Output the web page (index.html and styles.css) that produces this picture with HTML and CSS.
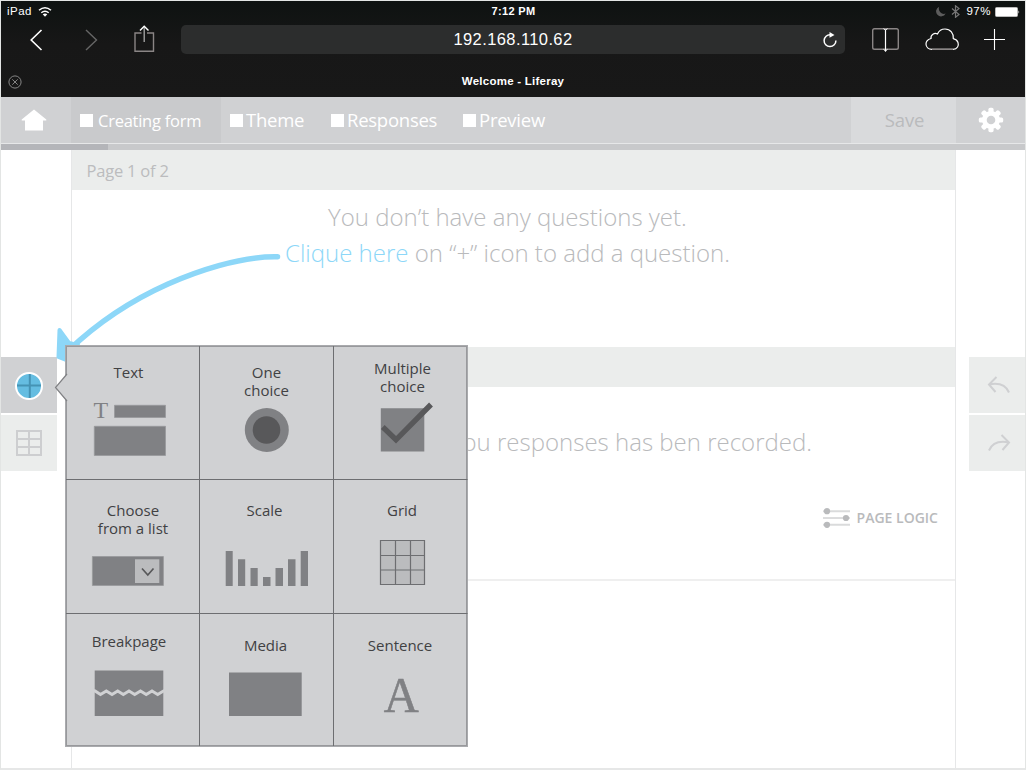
FILE: index.html
```html
<!DOCTYPE html>
<html lang="en">
<head>
<meta charset="utf-8">
<title>Welcome - Liferay</title>
<link rel="stylesheet" href="styles.css">
</head>
<body>
<div class="device">
  <header class="browser">
    <div class="status">
      <div class="status-left"><span class="carrier">iPad</span>
        <svg width="14" height="12" viewBox="0 0 14 12" fill="none" stroke="#fff" stroke-width="1.5"><path d="M1 4.300Q7 -.8 13 4.300M3.300 6.800Q7 3.600 10.700 6.800"/><path d="M4.700 8.300Q7 6.600 9.300 8.300L7 10.700Z" fill="#fff" stroke="none"/></svg>
      </div>
      <span class="clock">7:12 PM</span>
      <div class="status-right">
        <svg width="10" height="11" viewBox="0 0 10 11"><path d="M3.200 .8A5 5 0 1 0 9.600 7.600A5.200 5.200 0 0 1 3.200 .8Z" fill="#5c5c5c"/></svg>
        <svg class="bluetooth" width="9" height="13" viewBox="0 0 9 13" fill="none" stroke="#777" stroke-width="1.200"><path d="M1 3.500L8 9.500L4.500 12.300V.8L8 3.500L1 9.500"/></svg>
        <span class="charge">97%</span>
        <svg width="25" height="10" viewBox="0 0 25 10"><rect x=".5" y=".5" width="22" height="9" rx="1" fill="#fff" stroke="#bbb"/><path d="M23.500 3.200Q25 5 23.500 6.800Z" fill="#fff"/></svg>
      </div>
    </div>
    <div class="toolbar">
      <svg width="180" height="40" viewBox="0 0 180 40" fill="none">
        <path d="M40.500 9L30.200 19L40.500 29" stroke="#fff" stroke-width="1.600"/>
        <path d="M85 9L95.500 19L85 29" stroke="#666" stroke-width="1.400"/>
        <path d="M140.500 12H134V30.300H152.500V12H146" stroke="#8a8585" stroke-width="1.400"/>
        <path d="M143.200 21V6" stroke="#aaa" stroke-width="1.300"/><path d="M139 9.500L143.200 5.200L147.500 9.500" stroke="#fff" stroke-width="1.400"/>
      </svg>
      <div class="address"><span>192.168.110.62</span>
        <svg class="reload" width="16" height="18" viewBox="0 0 16 18"><path d="M8.500 3.800A5.900 5.900 0 1 0 13.900 9.500" fill="none" stroke="#fff" stroke-width="1.500"/><path d="M7.500 1L12.500 3.900L7.500 6.700Z" fill="#fff"/></svg>
      </div>
      <svg width="180" height="40" viewBox="845 21 180 40" fill="none">
        <rect x="872.700" y="28.700" width="25.600" height="20.600" rx="1.800" stroke="#8a8585" stroke-width="1.400"/><path d="M885.500 29.500V51.500" stroke="#fff" stroke-width="1.200"/><path d="M883.500 28.700L885.500 30L887.500 28.700M883.500 49.300L885.500 51L887.500 49.300" stroke="#fff"/>
        <path d="M932 49.300H953C957.500 49.300 959 45.500 958 42.500C957.200 40 955 39 953.300 38.600C953.800 33.500 950.500 29 945 29C941.500 29 938.800 31 937.500 34C934.500 32.500 930.500 34.500 931 38.500C927.500 39.500 926 41.500 926 44C926 47 928.500 49.300 932 49.300Z" stroke="#fff" stroke-width="1.200"/><path d="M932 49.300H953" stroke="#8a8585" stroke-width="1.400"/>
        <path d="M984 39.500H1005M994.500 29V50" stroke="#fff" stroke-width="1.100"/>
      </svg>
    </div>
    <div class="tab">
      <svg width="14" height="14" viewBox="0 0 14 14" fill="none" stroke="#858585"><circle cx="7" cy="7" r="6.100"/><path d="M4.300 4.300L9.700 9.700M9.700 4.300L4.300 9.700"/></svg>
      <span>Welcome - Liferay</span>
    </div>
  </header>

  <nav class="nav">
    <div class="nav-home"><svg width="26" height="22" viewBox="0 0 26 22" fill="#fff"><path d="M13 .6L25.300 10.500V11.500H22V21.500H4V11.500H.7V10.500Z"/></svg></div>
    <div class="nav-item current"><i class="box"></i><span>Creating form</span></div>
    <div class="nav-item theme"><i class="box"></i><span>Theme</span></div>
    <div class="nav-item responses"><i class="box"></i><span>Responses</span></div>
    <div class="nav-item preview"><i class="box"></i><span>Preview</span></div>
    <div class="nav-save">Save</div>
    <div class="nav-gear">
      <svg width="26" height="26" viewBox="-13 -13 26 26"><g fill="#fff"><circle r="9"/><rect x="-2.600" y="-12.200" width="5.200" height="24.400" rx="1.700"/><rect x="-12.200" y="-2.600" width="24.400" height="5.200" rx="1.700"/><g transform="rotate(45)"><rect x="-2.600" y="-12.200" width="5.200" height="24.400" rx="1.700"/><rect x="-12.200" y="-2.600" width="24.400" height="5.200" rx="1.700"/></g></g><circle r="4.300" fill="#d0d1d3"/></svg>
    </div>
  </nav>
  <div class="progress"><div class="progress-done"></div></div>

  <main class="main">
    <aside class="side side-left">
      <div class="tool active"><svg width="30" height="30" viewBox="-15 -15 30 30"><circle r="13" fill="#65bde1" stroke="#fff" stroke-width="2"/><path d="M-12 -.5H12M.8 -12V12" stroke="#4593b4" stroke-width="2"/></svg></div>
      <div class="tool"><svg width="26" height="26" viewBox="0 0 26 26" fill="none" stroke="#cdced0" stroke-width="2"><path d="M1 1H25V25H1ZM13 1V25M1 9H25M1 17H25"/></svg></div>
    </aside>
    <div class="pages">
      <div class="page-head">Page 1 of 2</div>
      <div class="page-body first">
        <p class="line one">You don’t have any questions yet.</p>
        <p class="line two"><a class="link">Clique here</a> on “+” icon to add a question.</p>
      </div>
      <div class="page-head"></div>
      <div class="page-body second">
        <p class="line three">you responses has ben recorded.</p>
        <div class="logic">
          <svg width="28" height="20" viewBox="0 0 28 20"><path d="M0 3.200H27M0 16.800H27" stroke="#dadbdc" stroke-width="2"/><path d="M0 10H27" stroke="#b9babc"/><g fill="#b9babc"><circle cx="4" cy="3.200" r="3.100"/><circle cx="23" cy="10" r="3.100"/><circle cx="4" cy="16.800" r="3.100"/></g></svg>
          <span>PAGE LOGIC</span>
        </div>
      </div>
    </div>
    <aside class="side side-right">
      <div class="tool"><svg width="24" height="18" viewBox="0 0 24 18" fill="none" stroke="#cfd0d2" stroke-width="2"><path d="M9.500 1L2 8.500L8.500 16M2 8.500C12 6.500 19 9.500 22 16.500"/></svg></div>
      <div class="tool"><svg width="24" height="18" viewBox="0 0 24 18" fill="none" stroke="#cfd0d2" stroke-width="2"><path d="M14.500 1L22 8.500L15.500 16M22 8.500C12 6.500 5 9.500 2 16.500"/></svg></div>
    </aside>
  </main>

  <svg class="arrow" width="240" height="115" viewBox="50 250 240 115"><path d="M277.500 256.800C240 256 195 272 168 284Q112 309 69 350" fill="none" stroke="#8dd7f8" stroke-width="5.500" stroke-linecap="round"/><path d="M59.500 330L69 343L78 345V358L66 360L58.500 357Z" fill="#8dd7f8" stroke="#8dd7f8" stroke-width="4" stroke-linejoin="round"/></svg>

  <section class="picker">
    <svg class="pointer" width="14" height="30" viewBox="0 0 14 30"><path d="M13 1L1.500 14.500L13 28" fill="#d0d1d3" stroke="#808184" stroke-width="1.200"/></svg>
    <div class="cell text"><div class="label">Text</div>
      <svg class="art" viewBox="66 400 133 79"><text class="serif" x="93.500" y="417.500" font-size="24" textLength="15">T</text><path d="M114.500 405.300H165.500V417.500H114.500ZM94.300 426.300H165.500V455.500H94.300Z" fill="#808184" stroke="#98999c" stroke-width=".8"/></svg></div>
    <div class="cell one-choice"><div class="label">One<br>choice</div>
      <svg class="art" viewBox="200 400 133 79"><circle cx="266.800" cy="430" r="22" fill="#808184"/><circle cx="266.500" cy="430" r="13.800" fill="#58585a"/></svg></div>
    <div class="cell multiple"><div class="label">Multiple<br>choice</div>
      <svg class="art" viewBox="334 400 133 79"><path d="M380.800 408.200H424.300V451.500H380.800Z" fill="#808184"/><path d="M382.800 427L396 439.800L431 404.500" fill="none" stroke="#58585a" stroke-width="5.400"/></svg></div>
    <div class="cell choose"><div class="label">Choose<br>from a list</div>
      <svg class="art" viewBox="66 534 133 79"><path d="M92.400 556.500H163.400V585.500H92.400Z" fill="#808184" stroke="#98999c" stroke-width=".8"/><path d="M135 559.300H159.300V583H135Z" fill="#bbbcbe"/><path d="M142 568.500L147.800 575L153.500 568.500" fill="none" stroke="#58585a" stroke-width="1.700"/></svg></div>
    <div class="cell scale"><div class="label">Scale</div>
      <svg class="art" viewBox="200 534 133 79" fill="#808184"><path d="M225.700 551h7v35h-7zM238 559.300h7.200v26.700h-7.200zM250.500 568h7.200v18h-7.200zM263 577h7.500v9h-7.500zM275.500 568h7.500v18h-7.500zM288 559.300h7.500v26.700h-7.500zM300.700 551h7.300v35h-7.300z"/></svg></div>
    <div class="cell grid"><div class="label">Grid</div>
      <svg class="art" viewBox="334 534 133 79"><path d="M380.500 540.500H424.500V584.500H380.500ZM395.500 540V585M410.500 540V585M380 555.500H425M380 570H425" fill="#bbbcbe" stroke="#6d6e71" stroke-width="1.200"/></svg></div>
    <div class="cell breakpage"><div class="label">Breakpage</div>
      <svg class="art" viewBox="66 668 133 79"><path d="M94.700 670.500H163.300V716H94.700Z" fill="#808184"/><path d="M93 690.500L95 691L100.500 694.500L106.300 691L112 694.500L117.700 691L123.300 694.500L129 691L134.700 694.500L140.500 691L146.200 694.500L152 691L157.700 694.500L163 691.300L164.500 690.500" fill="none" stroke="#d0d1d3" stroke-width="3"/></svg></div>
    <div class="cell media"><div class="label">Media</div>
      <svg class="art" viewBox="200 668 133 79"><path d="M229 672.500H301.700V716H229Z" fill="#808184"/></svg></div>
    <div class="cell sentence"><div class="label">Sentence</div>
      <svg class="art" viewBox="334 668 133 79"><text class="serif heavy" x="383.800" y="711.500" font-size="51" textLength="35" lengthAdjust="spacingAndGlyphs">A</text></svg></div>
  </section>
</div>
</body>
</html>
```
FILE: styles.css
```css
* { box-sizing: border-box; }
body { margin: 0; width: 1026px; height: 770px; overflow: hidden; background: #fff; font-family: "Open Sans", sans-serif; }
svg { display: block; flex: none; }
p { margin: 0; }

.device { position: relative; width: 1026px; height: 770px; display: flex; flex-direction: column; border: 1px solid #e3e5e4; border-bottom: 2px solid #e6e7e7; }

/* Browser chrome */
.browser { height: 96px; flex: none; color: #fff; background: linear-gradient(#0e1211, #171717 45%, #181818); font-family: "Liberation Sans", sans-serif; }
.status { height: 20px; display: grid; grid-template-columns: 1fr auto 1fr; align-items: center; padding: 1px 5px 0 6px; font-size: 11.5px; line-height: 19px; }
.status-left, .status-right { display: flex; align-items: center; }
.status-left { gap: 6px; }
.carrier { letter-spacing: .5px; }
.status-right { justify-content: flex-end; }
.bluetooth { margin-left: 5px; }
.charge { margin: 0 4px 0 6px; letter-spacing: .5px; }
.clock { font-weight: bold; font-size: 11px; letter-spacing: .35px; }
.toolbar { height: 40px; display: flex; }
.address { width: 664px; height: 29px; margin-top: 4px; display: flex; align-items: center; justify-content: center; position: relative; border-radius: 5px; background: #2c2d2d; font-size: 16.5px; letter-spacing: .4px; }
.reload { position: absolute; right: 7px; top: 6px; }
.tab { height: 36px; display: grid; grid-template-columns: 60px 1fr 60px; align-items: center; padding: 5px 0 0 7px; text-align: center; font-size: 11.5px; font-weight: bold; letter-spacing: .25px; }
.tab span { margin-left: -7px; margin-bottom: 1px; }

/* Form navigation */
.nav { height: 46px; flex: none; display: flex; background: #d0d1d3; color: #fff; font-size: 18.500px; }
.nav-home { width: 70px; display: flex; align-items: center; justify-content: center; padding: 0 5px 1px 0; }
.nav-item { display: flex; align-items: center; white-space: nowrap; letter-spacing: -.25px; }
.nav-item span { margin-top: -1px; }
.box { width: 13px; height: 13px; background: #fff; flex: none; }
.current { width: 150px; padding-left: 9px; gap: 5px; background: #c9cacc; font-size: 16.500px; }
.current span { margin-top: 1px; }
.theme { width: 101px; padding-left: 9px; gap: 3px; }
.responses { width: 132px; padding-left: 9px; gap: 3px; }
.preview { padding-left: 9px; gap: 3px; }
.nav-save { margin-left: auto; width: 105px; padding-left: 2px; background: #d9dadc; color: #babbbd; line-height: 46px; text-align: center; font-size: 18.500px; letter-spacing: -.2px; }
.nav-gear { width: 69px; display: flex; align-items: center; justify-content: center; }
.progress { height: 7px; flex: none; border-top: 1px solid #e6e7e8; background: #c8c9cb; }
.progress-done { width: 107px; height: 6px; background: #b4b5b9; }

/* Editor */
.main { flex: 1; display: flex; }
.side { width: 70px; padding-top: 207px; display: flex; flex-direction: column; gap: 2px; }
.side-right { width: 69px; padding-left: 13px; }
.side-right .tool { padding-left: 3px; }
.tool { width: 56px; height: 56px; display: flex; align-items: center; justify-content: center; background: #ebedec; }
.active { background: #d0d1d3; padding-top: 2px; }
.pages { width: 885px; border: solid #e6e7e8; border-width: 0 1px; }
.page-head { height: 40px; padding-left: 14.5px; background: #ebedec; color: #bbbcbe; font-size: 16.500px; line-height: 42px; letter-spacing: -.22px; }
.page-body { height: 157px; color: #b9babc; }
.line { font-size: 24px; line-height: 36px; font-weight: 300; white-space: nowrap; }
.first { padding-top: 9px; }
.one { padding-left: 256px; }
.two { padding-left: 213px; }
.link { color: #8dd7f8; }
.second { height: 194px; padding: 37px 0 0; border-bottom: 2px solid #efefef; display: flex; flex-direction: column; align-items: flex-end; }
.three { padding-right: 143px; }
.logic { display: flex; align-items: center; gap: 6px; margin: 48px 17px 0 0; font-size: 14px; line-height: 20px; font-weight: 600; }

.arrow { position: absolute; left: 49px; top: 249px; }

/* Question type picker, floating over the page */
.picker { position: absolute; left: 64px; top: 344px; width: 403px; height: 402px; display: grid; grid-template-columns: repeat(3, 134px); grid-template-rows: 134px 134px 132px; border: 1px solid #a9aaad; box-shadow: inset 0 0 0 1px #98999c; background: #d0d1d3; color: #414143; }
.pointer { position: absolute; left: -12px; top: 27px; }
.cell { border: solid #6d6e71; border-width: 0 1px 1px 0; display: flex; flex-direction: column; }
.multiple, .grid, .sentence { border-right-color: transparent; }
.breakpage, .media, .sentence { border-bottom: 0; }
.label { height: 54px; flex: none; text-align: center; font-size: 15px; line-height: 18px; white-space: nowrap; }
.art { width: 133px; height: 79px; overflow: visible; }
.text .label { padding: 17px 8px 0 0; }
.one-choice .label { padding-top: 17px; }
.multiple .label { padding: 13px 0 0 4px; }
.choose .label { padding: 21px 0 0 1px; }
.scale .label { padding: 21px 4px 0 0; }
.grid .label { padding: 21px 0 0 3px; }
.breakpage .label { padding: 18px 7px 0 0; }
.media .label { padding: 22px 2px 0 0; }
.sentence .label { padding: 22px 1px 0 0; }
.serif { font-family: "Liberation Serif", serif; fill: #808184; }
.heavy { stroke: #808184; stroke-width: .6; }
```
